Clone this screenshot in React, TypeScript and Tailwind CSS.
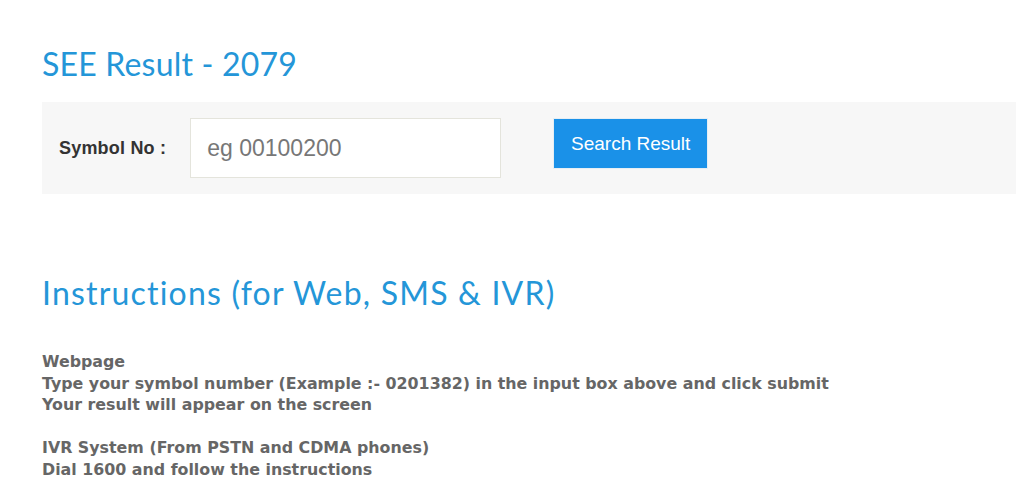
import React from "react";

export default function App() {
  return (
    <div className="w-[1016px] h-[500px] overflow-hidden bg-white">
      <div className="pl-[42px] pt-[42px]">
        <h1 className="text-[32px] leading-[44px] text-[#2496d8] font-['Lato',sans-serif] font-normal tracking-[0.2px]">
          SEE Result - 2079
        </h1>
        <div className="mt-[16px] h-[92px] bg-[#f7f7f7] flex items-start font-['Liberation_Sans',Arial,sans-serif]">
          <label className="ml-[17px] mt-[36px] text-[18px] font-bold text-[#333] leading-[20px] tracking-[0.2px]">
            Symbol No :
          </label>
          <input
            className="ml-[24px] mt-[16px] w-[311px] h-[60px] bg-white border border-[#e4e4dc] px-[16px] text-[23px] text-[#555] placeholder:text-[#777] outline-none"
            placeholder="eg 00100200"
          />
          <button className="ml-[52px] mt-[16px] w-[155px] h-[51px] border-[1.5px] border-[#e6eef4] bg-[#1a91e8] text-white text-[19px] leading-[20px]">
            Search Result
          </button>
        </div>
        <h2 className="mt-[77px] text-[32px] leading-[44px] text-[#2496d8] font-['Lato',sans-serif] font-normal tracking-[1.2px]">
          Instructions (for Web, SMS &amp; IVR)
        </h2>
        <div className="mt-[36px] text-[15.85px] leading-[21.6px] text-[#666] font-['DejaVu_Sans',Tahoma,sans-serif] font-semibold">
          <p>Webpage</p>
          <p>Type your symbol number (Example :- 0201382) in the input box above and click submit</p>
          <p>Your result will appear on the screen</p>
          <p className="mt-[21.6px]">IVR System (From PSTN and CDMA phones)</p>
          <p>Dial 1600 and follow the instructions</p>
        </div>
      </div>
    </div>
  );
}
